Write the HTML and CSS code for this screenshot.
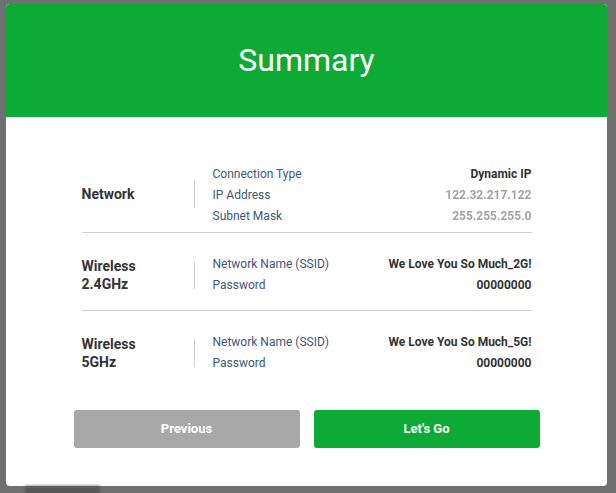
FILE: index.html
```html
<html>
<head>
    <meta http-equiv="Content-Type" content="text/html;charset=utf-8">
    <link rel="stylesheet" href="styles.css">
</head>
<body>
    <div id="modal">
        <div id="header">Summary</div>
        <div id="content">
            <div class="sec first">
                <div class="label">Network</div>
                <div class="bar"></div>
                <div class="rows">
                    <div class="row"><span class="key">Connection Type</span><span class="val">Dynamic IP</span></div>
                    <div class="row"><span class="key">IP Address</span><span class="val hidden">122.32.217.122</span></div>
                    <div class="row"><span class="key">Subnet Mask</span><span class="val hidden">255.255.255.0</span></div>
                </div>
            </div>
            <div class="sec">
                <div class="label">Wireless<br>2.4GHz</div>
                <div class="bar"></div>
                <div class="rows">
                    <div class="row"><span class="key">Network Name (SSID)</span><span class="val">We Love You So Much_2G!</span></div>
                    <div class="row"><span class="key">Password</span><span class="val">00000000</span></div>
                </div>
            </div>
            <div class="sec last">
                <div class="label">Wireless<br>5GHz</div>
                <div class="bar"></div>
                <div class="rows">
                    <div class="row"><span class="key">Network Name (SSID)</span><span class="val">We Love You So Much_5G!</span></div>
                    <div class="row"><span class="key">Password</span><span class="val">00000000</span></div>
                </div>
            </div>
        </div>
        <div id="buttons">
            <div class="btn prev">Previous</div>
            <div class="btn go">Let's Go</div>
        </div>
    </div>
    <div class="behind"></div>
</body>
</html>
```

FILE: styles.css
```css
body {
    margin: 0;
    background-color: #707070;
    font-family: Roboto, "Liberation Sans", sans-serif;
    overflow: hidden;
}

#modal {
    width: 601px;
    margin: 4px 0 0 6px;
    background-color: #fff;
    border-radius: 4px;
    overflow: hidden;
}

#header {
    height: 113px;
    background-color: #0dab35;
    color: #fff;
    font-size: 32px;
    line-height: 113px;
    text-align: center;
}

#content {
    width: 450px;
    margin: 0 auto;
    padding-top: 47px;
}

.sec {
    display: flex;
    align-items: center;
    padding: 21px 0 14px;
    border-bottom: 1px solid #cfcfcf;
}

.sec.first {
    padding-top: 0;
    padding-bottom: 5px;
}

.sec.first .label,
.sec.first .bar {
    margin-bottom: 4px;
}

.sec.last {
    border-bottom: none;
    padding-bottom: 0;
}

.label {
    width: 112px;
    font-size: 14px;
    font-weight: bold;
    line-height: 18px;
    color: #333;
}

.bar {
    width: 1px;
    height: 28px;
    background-color: #cfcfcf;
    margin-right: 18px;
}

.rows {
    flex: 1;
}

.row {
    display: flex;
    justify-content: space-between;
    font-size: 12px;
    line-height: 21px;
}

.key {
    color: #3e5676;
}

.val {
    color: #333;
    font-weight: bold;
}

.val.hidden {
    color: #555;
    opacity: 0.55;
    filter: blur(0.6px);
}

#buttons {
    display: flex;
    justify-content: center;
    gap: 14px;
    padding: 36px 0 38px;
}

.btn {
    width: 226px;
    height: 38px;
    line-height: 38px;
    border-radius: 3px;
    color: #fff;
    font-size: 13px;
    font-weight: bold;
    text-align: center;
}

.prev {
    background-color: #a8a8a8;
}

.go {
    background-color: #0dab35;
}

.behind {
    width: 75px;
    height: 12px;
    margin: 0 0 0 25px;
    background-color: #585858;
    filter: blur(1.5px);
}
```
